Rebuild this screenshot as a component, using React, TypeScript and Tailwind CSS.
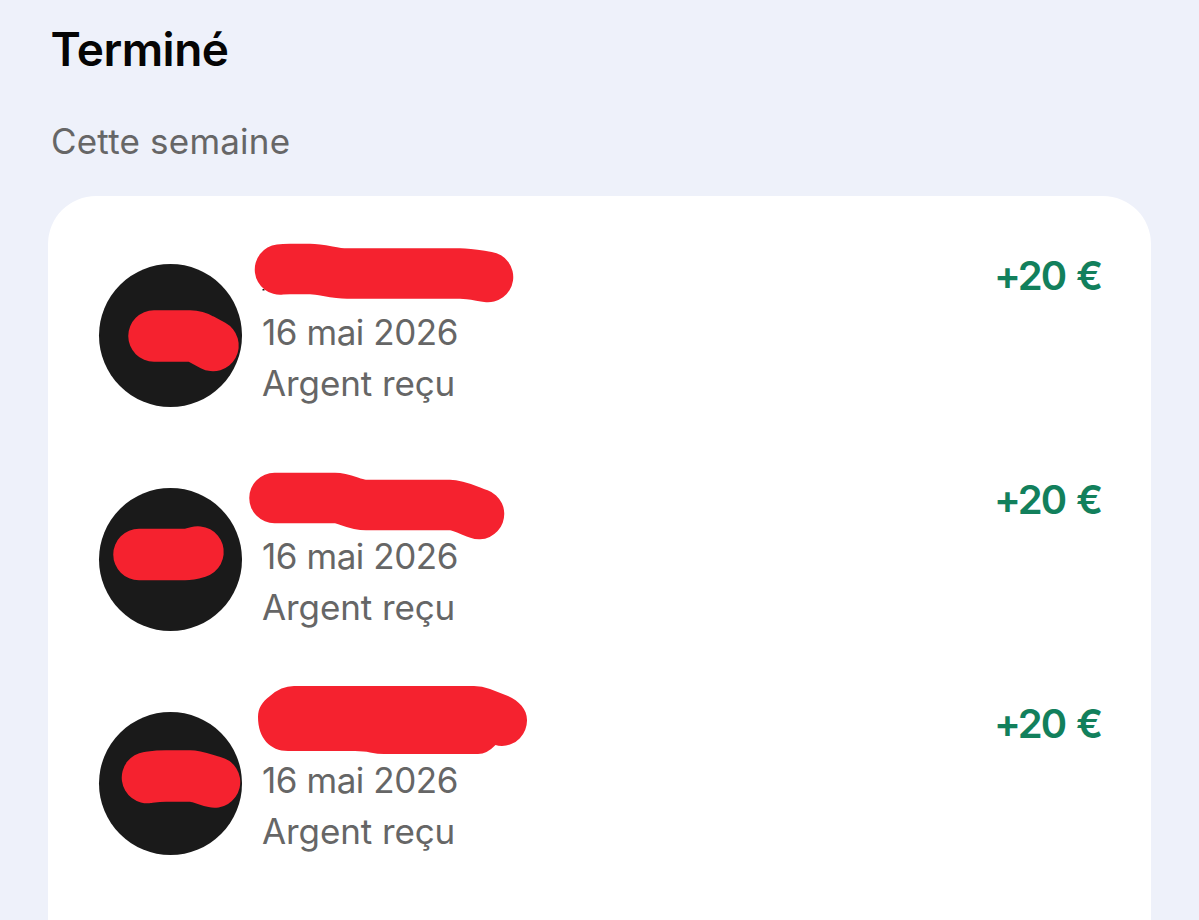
import React from 'react';

interface Transaction {
  id: number;
  date: string;
  label: string;
  amount: string;
  avatarStroke: string;
  nameStroke?: string;
  nameFill?: string;
  speck?: boolean;
}

const transactions: Transaction[] = [
  {
    id: 1,
    date: '16 mai 2026',
    label: 'Argent reçu',
    amount: '+20 €',
    avatarStroke: 'M106 140H142Q148 140 153 143L165 149.500',
    nameStroke: 'M232 73.500Q236 73 242 73H262C275 73 285 77.500 299 77.500H412C422 77.500 430 79.500 440 81',
    speck: true
  },
  {
    id: 2,
    date: '16 mai 2026',
    label: 'Argent reçu',
    amount: '+20 €',
    avatarStroke: 'M91 134.500H137C142 134.500 145 133.500 150 132',
    nameStroke: 'M226.500 78H287C298 78 305 85 318 85H402C410 85 420 90 431 94'
  },
  {
    id: 3,
    date: '16 mai 2026',
    label: 'Argent reçu',
    amount: '+20 €',
    avatarStroke: 'M99.500 133.500C107 132.500 110 132 118 132H142C150 132 158 136 166.500 138',
    nameFill:
      'M210 73C210 64 214 58 222 52Q233 42 246 42H426Q434 42 442 45L460 52C471 57 479 65 479 76A25.500 25.500 0 0 1 454 102Q450 102 447.500 101Q439 110 430 110H336Q330 110 322 108.500Q316 107 307 107H240C222 107 210 94 210 73Z'
  }
];

const TransactionRow: React.FC<{ item: Transaction }> = ({ item }) => {
  return (
    <li className="relative flex h-[224px] items-start pr-[50px] pl-[50.5px]">
      <div className="mt-[68.4px] size-[143px] shrink-0 rounded-full bg-[#1a1a1a]" />

      <div className="mt-[111px] ml-[20.5px] flex-1 text-[35px] leading-[51px] text-[#666666]">
        <div className="tracking-[-0.45px]">{item.date}</div>
        <div className="tracking-[-0.1px]">{item.label}</div>
      </div>

      <div className="mt-[54px] text-[40px] leading-[52px] font-semibold tracking-[-2.1px] text-[#12805c] [word-spacing:3px]">
        {item.amount}
      </div>

      {/* Marker over the avatar and the name */}
      <svg
        className="pointer-events-none absolute top-0 left-0"
        width="500"
        height="224"
        viewBox="0 0 500 224"
        fill="none"
        stroke="#f5222f"
        strokeLinecap="round"
        strokeLinejoin="round"
      >
        {item.speck && <rect x="214.500" y="93" width="2" height="1.500" fill="#1a1a1a" stroke="none" />}
        <path d={item.avatarStroke} strokeWidth="51.500" />
        {item.nameStroke && <path d={item.nameStroke} strokeWidth="50.500" />}
        {item.nameFill && <path d={item.nameFill} fill="#f5222f" stroke="none" />}
      </svg>
    </li>
  );
};

const App: React.FC = () => {
  return (
    <div className="flex h-[920px] w-[1199px] flex-col overflow-hidden bg-[#eef1fa] px-[48px] font-['Inter','Liberation_Sans',sans-serif]">
      <h1 className="mt-[20px] ml-[2.5px] text-[46px] leading-[58px] font-semibold tracking-[-0.5px] text-[#050505]">
        Terminé
      </h1>
      <h2 className="mt-[39px] ml-[3px] text-[35px] leading-[48px] tracking-[0.2px] text-[#666666]">
        Cette semaine
      </h2>

      <ul className="mt-[31px] w-[1103px] flex-1 rounded-t-[48px] bg-white">
        {transactions.map(item => (
          <TransactionRow key={item.id} item={item} />
        ))}
      </ul>
    </div>
  );
};

export default App;
